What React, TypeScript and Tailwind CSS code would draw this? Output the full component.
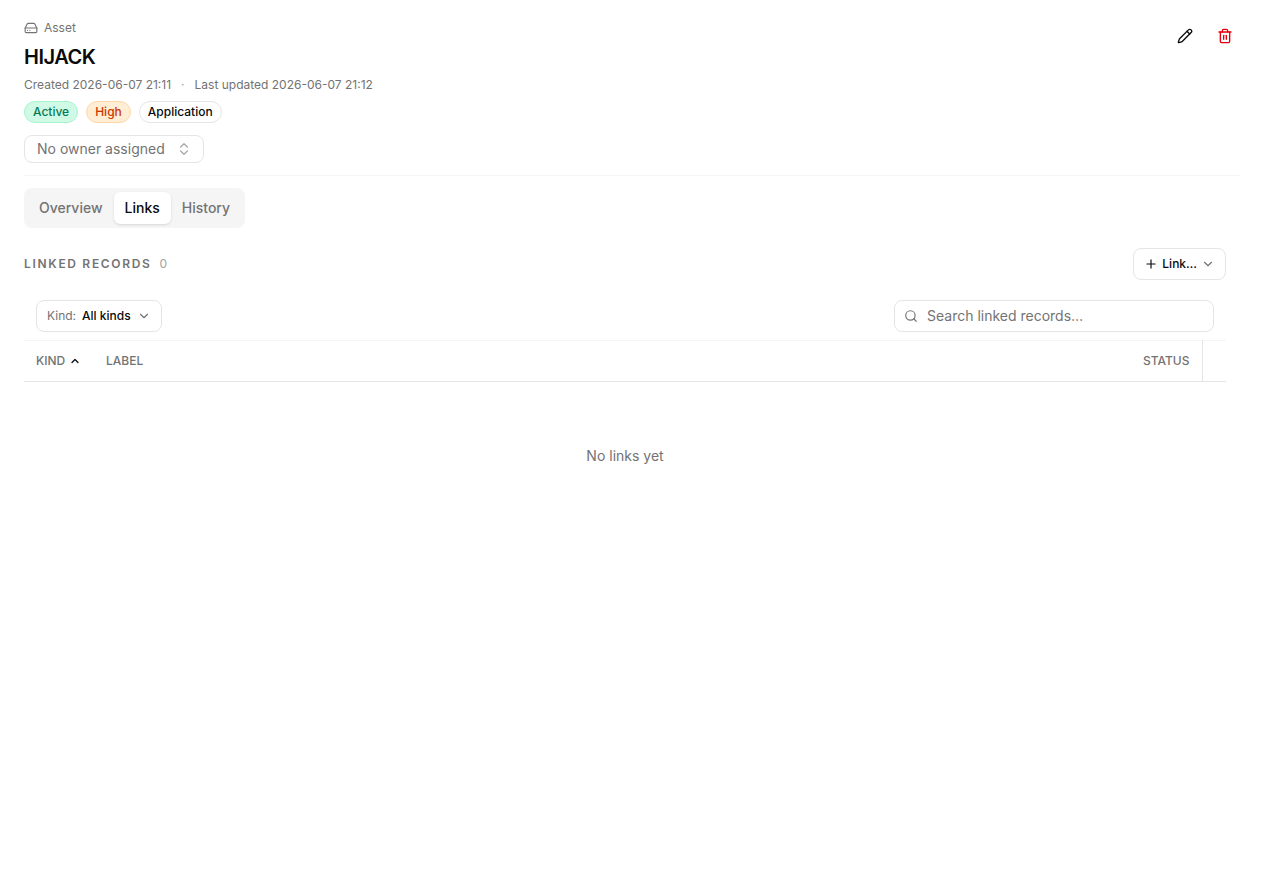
import { useState } from "react";
import {
  ChevronDown,
  ChevronsUpDown,
  ChevronUp,
  HardDrive,
  Pencil,
  Plus,
  Search,
  Trash2,
} from "lucide-react";

const tabs = ["Overview", "Links", "History"];

function Header() {
  return (
    <header className="flex items-start justify-between border-b border-neutral-100 pb-3">
      <div className="flex flex-col items-start">
        <div className="flex items-center gap-1.5 text-xs text-neutral-500">
          <HardDrive className="size-3.5" aria-hidden="true" />
          <span>Asset</span>
        </div>
        <h1 className="mt-[7px] text-xl leading-7 font-semibold tracking-tight">HIJACK</h1>
        <div className="mt-[5px] flex items-center gap-2.5 text-xs leading-[18px] text-neutral-500">
          <span>Created 2026-06-07 21:11</span>
          <span className="text-neutral-400" aria-hidden="true">·</span>
          <span>Last updated 2026-06-07 21:12</span>
        </div>
        <div className="mt-[7px] flex items-center gap-2 text-xs font-medium">
          <span className="rounded-full border border-emerald-200 bg-emerald-100 px-2 py-0.5 text-emerald-700">Active</span>
          <span className="rounded-full border border-orange-200 bg-orange-100 px-2 py-0.5 text-orange-700">High</span>
          <span className="rounded-full border border-neutral-200 px-2 py-0.5">Application</span>
        </div>
        <div className="relative mt-3">
          <select
            aria-label="Owner"
            className="block h-7 w-[180px] appearance-none rounded-lg border border-neutral-200 bg-white pr-8 pl-3 text-sm leading-5 text-neutral-500"
          >
            <option>No owner assigned</option>
          </select>
          <ChevronsUpDown className="pointer-events-none absolute top-1.5 right-3 size-4 text-neutral-500 opacity-60" aria-hidden="true" />
        </div>
      </div>
      <div className="flex gap-2">
        <button type="button" aria-label="Edit" className="flex size-8 items-center justify-center rounded-lg">
          <Pencil className="size-4" />
        </button>
        <button type="button" aria-label="Delete" className="flex size-8 items-center justify-center rounded-lg text-red-600">
          <Trash2 className="size-4" />
        </button>
      </div>
    </header>
  );
}

function LinkedRecords() {
  return (
    <section className="mt-5 pr-[15px]">
      <div className="flex items-center justify-between">
        <div className="flex items-baseline gap-2 text-xs">
          <h2 className="font-semibold tracking-[0.14em] text-neutral-500">LINKED RECORDS</h2>
          <span className="text-neutral-400">0</span>
        </div>
        <button type="button" className="flex h-8 items-center gap-1 rounded-lg border border-neutral-200 px-2.5 text-xs font-medium">
          <Plus className="size-3.5" aria-hidden="true" />
          Link…
          <ChevronDown className="size-3.5 text-neutral-500" aria-hidden="true" />
        </button>
      </div>

      <div className="mt-5 flex items-center justify-between px-3 pb-2">
        <div className="relative flex h-8 items-center rounded-lg border border-neutral-200 pl-2.5 text-xs">
          <label htmlFor="kind" className="text-neutral-500">Kind:</label>
          <select id="kind" className="h-7 appearance-none rounded-lg bg-transparent pr-[30px] pl-1.5 font-medium">
            <option>All kinds</option>
          </select>
          <ChevronDown className="pointer-events-none absolute right-2.5 size-3.5 text-neutral-500" aria-hidden="true" />
        </div>
        <div className="relative flex w-80 items-center">
          <Search className="pointer-events-none absolute left-2.5 size-3.5 text-neutral-500" aria-hidden="true" />
          <input
            type="search"
            aria-label="Search linked records"
            placeholder="Search linked records…"
            className="h-8 w-full rounded-lg border border-neutral-200 pr-3 pb-px pl-8 text-sm placeholder:text-neutral-500"
          />
        </div>
      </div>

      <table className="w-full border-collapse text-left text-xs">
        <thead>
          <tr className="h-[41px] border-t border-b border-t-neutral-100 border-b-neutral-200 text-neutral-500">
            <th scope="col" aria-sort="ascending" className="w-[70px] px-3 font-medium">
              <button type="button" className="flex items-center gap-1">
                KIND
                <ChevronUp className="size-3 text-neutral-950" strokeWidth={2.5} aria-hidden="true" />
              </button>
            </th>
            <th scope="col" className="px-3 font-medium">LABEL</th>
            <th scope="col" className="w-[70px] border-r border-neutral-200 px-3 font-medium">STATUS</th>
            <td className="w-6" />
          </tr>
        </thead>
        <tbody>
          <tr>
            <td colSpan={4} className="py-16 text-center text-sm text-neutral-500">No links yet</td>
          </tr>
        </tbody>
      </table>
    </section>
  );
}

export default function App() {
  const [active, setActive] = useState("Links");
  return (
    <main className="min-h-screen bg-white px-6 pt-5 pb-6 font-['Inter',sans-serif] text-neutral-950">
      <Header />
      <div role="tablist" className="mt-3 flex h-10 w-fit rounded-lg bg-neutral-100 p-1 text-sm font-medium">
        {tabs.map((tab) => (
          <button
            key={tab}
            type="button"
            role="tab"
            aria-selected={tab === active}
            onClick={() => setActive(tab)}
            className={
              tab === active
                ? "rounded-md bg-white px-[11px] text-neutral-950 shadow-sm"
                : "rounded-md px-[11px] text-neutral-500"
            }
          >
            {tab}
          </button>
        ))}
      </div>
      <LinkedRecords />
    </main>
  );
}
